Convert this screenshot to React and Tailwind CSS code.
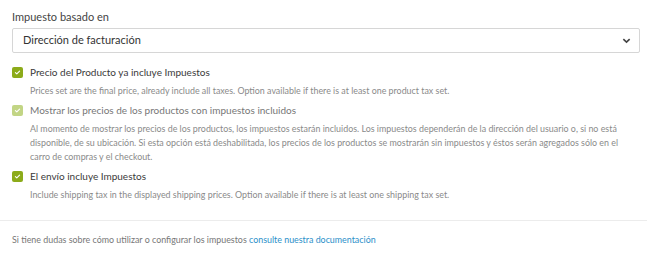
import React from 'react';

const font = { fontFamily: 'Lato, "Open Sans", sans-serif' };

const Check = ({ disabled }) => (
  <span
    className={`flex h-[11px] w-[11px] shrink-0 items-center justify-center rounded-[2px] ${
      disabled ? 'bg-[#c2d585]' : 'bg-[#8cab1a]'
    }`}
  >
    <svg viewBox="0 0 10 10" className="h-[7px] w-[7px]">
      <path d="M2 5.2 L4 7 L8 3" fill="none" stroke="white" strokeWidth="1.6" strokeLinecap="round" strokeLinejoin="round" />
    </svg>
  </span>
);

const Option = ({ label, disabled, children }) => (
  <div>
    <label className="flex h-[16px] items-center gap-[7px]">
      <Check disabled={disabled} />
      <span className={`text-[10px] ${disabled ? 'text-[#777]' : 'text-[#3a3a3a]'}`}>{label}</span>
    </label>
    <p className="mt-[4px] pl-[18px] text-[8.9px] leading-[14px] text-[#8a8a8a]">{children}</p>
  </div>
);

export default function App() {
  return (
    <div className="w-[647px] bg-white" style={font}>
      <div className="pl-[12px] pr-[7px] pt-[9px] pb-[18px]">
        <div className="text-[11px] leading-[16px] text-[#444]">Impuesto basado en</div>
        <div className="mt-[3px] flex h-[25px] items-center justify-between rounded-[2px] border border-[#d6d6d6] pl-[10px] pr-[8px]">
          <span className="text-[11px] text-[#333]">Dirección de facturación</span>
          <svg viewBox="0 0 10 10" className="h-[9px] w-[9px]">
            <path d="M1.5 3.5 L5 6.8 L8.5 3.5" fill="none" stroke="#444" strokeWidth="1.8" />
          </svg>
        </div>
        <div className="mt-[11px] flex flex-col gap-[4px]">
          <Option label="Precio del Producto ya incluye Impuestos">
            Prices set are the final price, already include all taxes. Option available if there is at least one product tax set.
          </Option>
          <Option label="Mostrar los precios de los productos con impuestos incluidos" disabled>
            Al momento de mostrar los precios de los productos, los impuestos estarán incluidos. Los impuestos dependerán de la dirección del usuario o, si no está disponible, de su ubicación. Si esta opción está deshabilitada, los precios de los productos se mostrarán sin impuestos y éstos serán agregados sólo en el carro de compras y el checkout.
          </Option>
          <Option label="El envío incluye Impuestos">
            Include shipping tax in the displayed shipping prices. Option available if there is at least one shipping tax set.
          </Option>
        </div>
      </div>
      <div className="border-t border-[#ececec] px-[12px] pt-[12px] pb-[14px] text-[8.9px] leading-[14px] text-[#777]">
        Si tiene dudas sobre cómo utilizar o configurar los impuestos{' '}
        <a className="text-[#2a8fc9]">consulte nuestra documentación</a>
      </div>
    </div>
  );
}
